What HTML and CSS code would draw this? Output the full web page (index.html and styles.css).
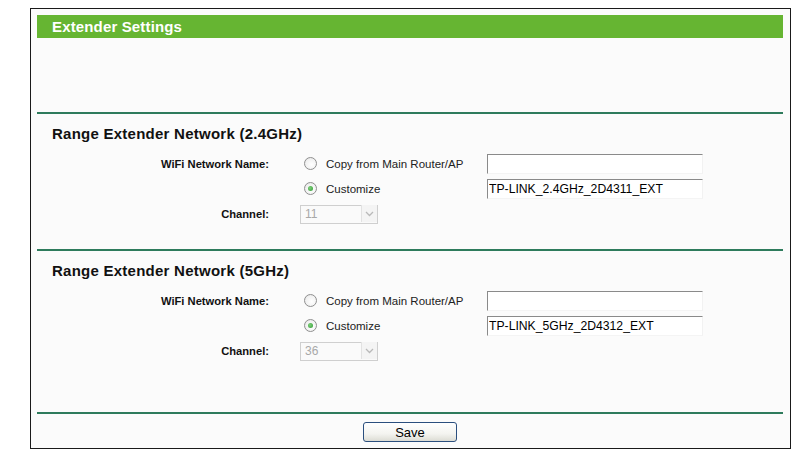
FILE: index.html
```html
<!DOCTYPE html>
<html lang="en">
<head>
<meta charset="utf-8">
<title>Extender Settings</title>
<link rel="stylesheet" href="styles.css">
</head>
<body>
<div class="panel">
  <div class="title">Extender Settings</div>
  <div class="spacer"></div>

  <section class="net">
    <h2 class="net-title">Range Extender Network (2.4GHz)</h2>
    <div class="row">
      <span class="lbl">WiFi Network Name:</span>
      <label class="opt"><input class="radio" type="radio" name="ssid24"><span>Copy from Main Router/AP</span></label>
      <input class="txt" type="text" value="">
    </div>
    <div class="row">
      <span class="lbl"></span>
      <label class="opt"><input class="radio" type="radio" name="ssid24" checked><span>Customize</span></label>
      <input class="txt" type="text" value="TP-LINK_2.4GHz_2D4311_EXT">
    </div>
    <div class="row">
      <span class="lbl">Channel:</span>
      <span class="sel">
        <select disabled><option>11</option></select>
        <span class="arrow"><svg width="9" height="6" viewBox="0 0 9 6"><path d="M1 1 L4.5 4.5 L8 1" fill="none" stroke="#b9b9b9" stroke-width="1.3"/></svg></span>
      </span>
    </div>
  </section>

  <section class="net">
    <h2 class="net-title">Range Extender Network (5GHz)</h2>
    <div class="row">
      <span class="lbl">WiFi Network Name:</span>
      <label class="opt"><input class="radio" type="radio" name="ssid5"><span>Copy from Main Router/AP</span></label>
      <input class="txt" type="text" value="">
    </div>
    <div class="row">
      <span class="lbl"></span>
      <label class="opt"><input class="radio" type="radio" name="ssid5" checked><span>Customize</span></label>
      <input class="txt" type="text" value="TP-LINK_5GHz_2D4312_EXT">
    </div>
    <div class="row">
      <span class="lbl">Channel:</span>
      <span class="sel">
        <select disabled><option>36</option></select>
        <span class="arrow"><svg width="9" height="6" viewBox="0 0 9 6"><path d="M1 1 L4.5 4.5 L8 1" fill="none" stroke="#b9b9b9" stroke-width="1.3"/></svg></span>
      </span>
    </div>
  </section>

  <div class="footer">
    <button class="btn" type="button">Save</button>
  </div>
</div>
</body>
</html>
```

FILE: styles.css
```css
body {
  margin: 0;
  background: #ffffff;
  font-family: "Liberation Sans", Arial, sans-serif;
  color: #000;
}

.panel {
  box-sizing: border-box;
  width: 761px;
  height: 441px;
  margin: 8px 0 0 30px;
  border: 1px solid #1a1a1a;
  background: #fbfbfb;
  padding: 6px 7px 0 6px;
  display: flex;
  flex-direction: column;
}

.title {
  height: 23px;
  line-height: 23px;
  background: #66b532;
  color: #ffffff;
  font-weight: bold;
  font-size: 15px;
  padding-left: 15px;
  letter-spacing: 0.15px;
}

.spacer {
  height: 74px;
}

.net {
  border-top: 2px solid #2e7b5c;
  margin-bottom: 23px;
}

.net-title {
  margin: 10px 0 7px 15px;
  height: 20px;
  line-height: 20px;
  font-size: 15px;
  font-weight: bold;
  letter-spacing: 0.25px;
  color: #111;
}

.row {
  display: flex;
  align-items: center;
  height: 25px;
}

.lbl {
  width: 232px;
  margin-right: 31px;
  text-align: right;
  font-size: 11.2px;
  font-weight: bold;
  color: #111;
  flex: none;
}

.opt {
  width: 187px;
  flex: none;
  display: flex;
  align-items: center;
  font-size: 11.5px;
  color: #222;
}

.radio {
  appearance: none;
  -webkit-appearance: none;
  width: 13px;
  height: 13px;
  margin: 0 9px 0 4px;
  border: 1px solid #8f8f8f;
  border-radius: 50%;
  background: radial-gradient(circle at 60% 60%, #ffffff 0%, #f1f1f1 60%, #dcdcdc 100%);
  box-sizing: border-box;
  position: relative;
  flex: none;
}

.radio:checked::after {
  content: "";
  position: absolute;
  left: 3px;
  top: 3px;
  width: 5px;
  height: 5px;
  border-radius: 50%;
  background: radial-gradient(circle at 40% 40%, #7fd07a 0%, #2f9a34 100%);
}

.txt {
  width: 216px;
  height: 20px;
  box-sizing: border-box;
  margin: 0;
  padding: 0 1px;
  border: 1px solid;
  border-color: #8a8a8a #f2f2f2 #f4f4f4 #8a8a8a;
  background: #ffffff;
  font-family: "Liberation Sans", Arial, sans-serif;
  font-size: 12.2px;
  color: #000;
  flex: none;
  outline: none;
}

.sel {
  position: relative;
  width: 78px;
  height: 19px;
  flex: none;
}

.sel select {
  appearance: none;
  -webkit-appearance: none;
  width: 78px;
  height: 19px;
  box-sizing: border-box;
  margin: 0;
  padding: 0 0 0 4px;
  border: 1px solid #cfcfcf;
  border-radius: 0;
  background: #fafafa;
  font-family: "Liberation Sans", Arial, sans-serif;
  font-size: 12px;
  color: #a8a8a8;
  opacity: 1;
}

.arrow {
  position: absolute;
  right: 1px;
  top: 1px;
  width: 16px;
  height: 17px;
  box-sizing: border-box;
  border-left: 1px solid #e2e2e2;
  background: #f4f4f4;
  display: flex;
  align-items: center;
  justify-content: center;
}

.footer {
  margin-top: 26px;
  border-top: 2px solid #2e7b5c;
  padding-top: 8px;
  display: flex;
  justify-content: center;
}

.btn {
  width: 94px;
  height: 20px;
  box-sizing: border-box;
  margin: 0;
  padding: 0;
  border: 1px solid #2b4f7e;
  border-radius: 3px;
  background: linear-gradient(#ffffff, #f4f4f0 60%, #dcdcd4);
  font-family: "Liberation Sans", Arial, sans-serif;
  font-size: 13px;
  color: #000;
}
```
